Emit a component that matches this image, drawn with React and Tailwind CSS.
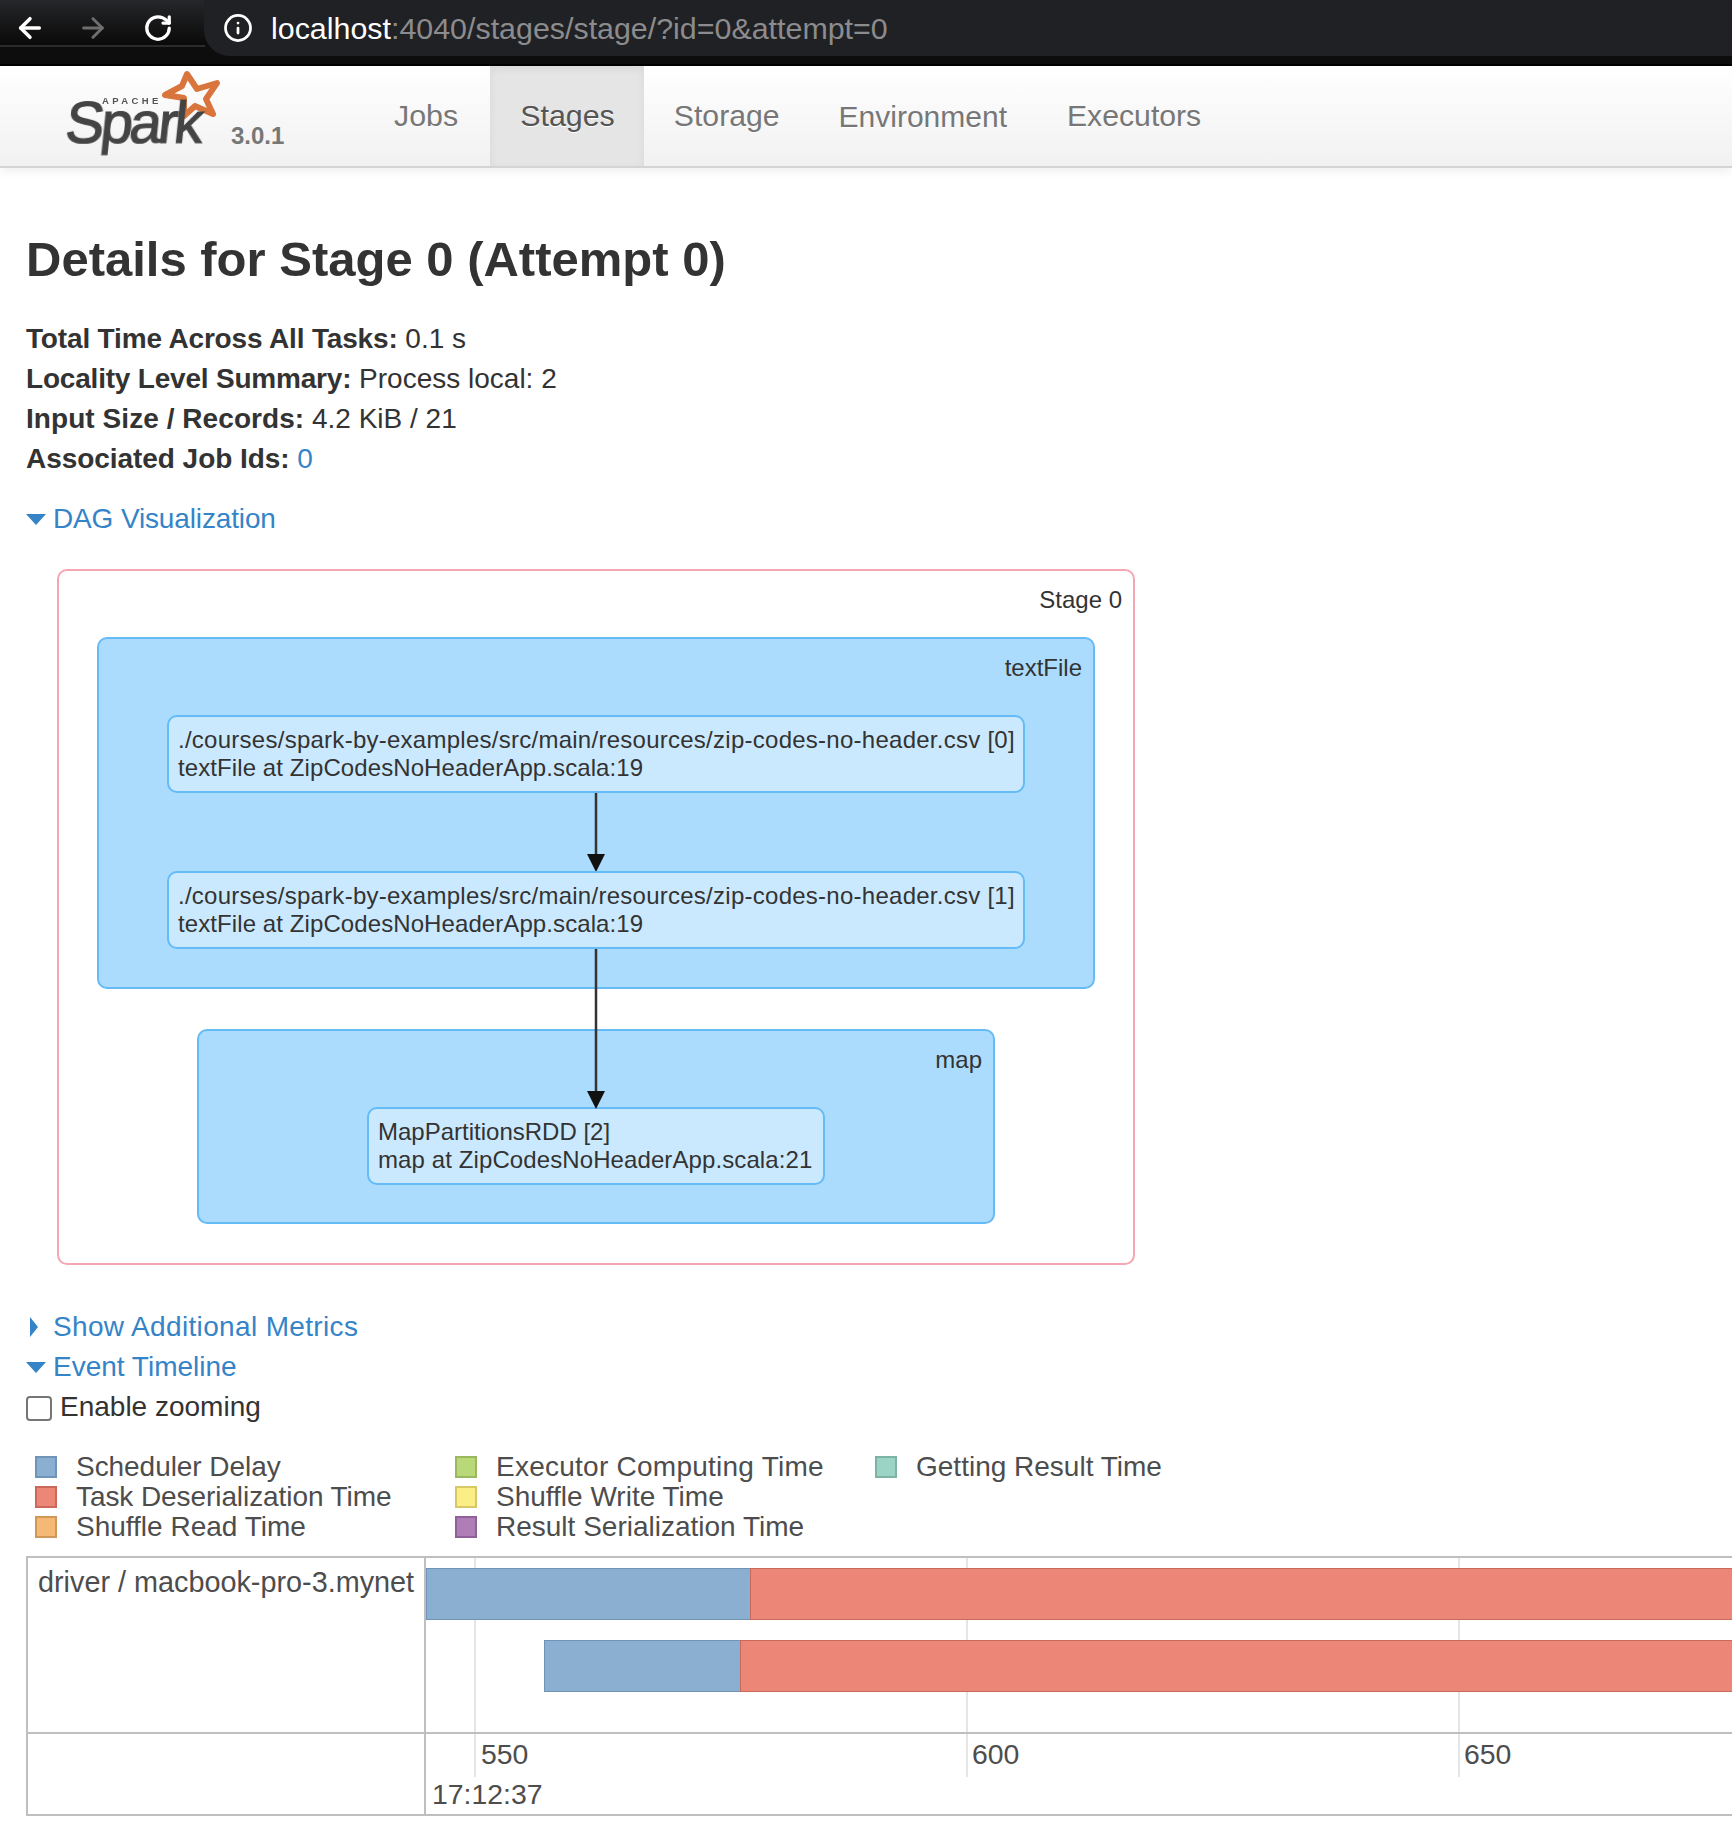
import React from "react";
import { ArrowLeft, ArrowRight, RotateCw, Info } from "lucide-react";

function Caret({ open }) {
  return open ? (
    <svg width="20" height="14" viewBox="0 0 20 14" className="mr-[7px] shrink-0"><polygon points="0,2 20,2 10,13" fill="#3584c8" /></svg>
  ) : (
    <svg width="20" height="20" viewBox="0 0 20 20" className="mr-[7px] shrink-0"><polygon points="4,0 4,20 12,10" fill="#3584c8" /></svg>
  );
}

function Arrow({ height, className }) {
  return (
    <svg width="20" height={height} viewBox={`0 0 20 ${height}`} className={`overflow-visible ${className}`}>
      <line x1="10" y1="0" x2="10" y2={height - 16} stroke="#333" strokeWidth="2.5" />
      <polygon points={`1,${height - 17} 19,${height - 17} 10,${height + 1}`} fill="#111" />
    </svg>
  );
}

function Node({ lines, className }) {
  return (
    <div className={`h-[78px] border-2 border-[#64bbf5] bg-[#cbe9fe] rounded-[10px] pl-[9px] pt-[9px] text-[24px] leading-[28px] text-[#333] whitespace-nowrap ${className}`}>
      {lines.map((l) => (<div key={l[0]} className={l[1]}>{l[0]}</div>))}
    </div>
  );
}

const legend = [
  ["Scheduler Delay", "bg-[#8aafd1] border-[#6f94b8]", "tracking-[-0.05px]"],
  ["Executor Computing Time", "bg-[#b9d878] border-[#9bb860]", "tracking-[0.25px]"],
  ["Getting Result Time", "bg-[#9bd3c5] border-[#7cb3a5]", ""],
  ["Task Deserialization Time", "bg-[#ec8778] border-[#c8695c]", "tracking-[-0.08px]"],
  ["Shuffle Write Time", "bg-[#fbee85] border-[#d8c868]", ""],
  null,
  ["Shuffle Read Time", "bg-[#f4b974] border-[#cf9858]", ""],
  ["Result Serialization Time", "bg-[#b07eb6] border-[#90609a]", ""],
  null,
];

const tabs = [
  ["Jobs", "pr-[32px] text-[30.4px] text-[#777]"],
  ["Stages", "pr-[29px] text-[30.4px] bg-[#e5e5e5] text-[#555] shadow-[inset_0_3px_8px_rgba(0,0,0,0.06)]"],
  ["Storage", "pr-[29px] text-[30.2px] text-[#777]"],
  ["Environment", "pr-[30px] text-[30px] text-[#777]"],
  ["Executors", "pr-[30px] text-[30.2px] text-[#777]"],
];

export default function App() {
  return (
    <div className="relative h-[1836px] w-[1732px] overflow-hidden bg-white font-['Liberation_Sans',Arial,sans-serif] text-[28px] text-[#333]">
      {/* browser bar */}
      <div className="flex h-[66px] bg-[#0d0d0d] border-b-2 border-black">
        <div className="flex h-[47px] w-[205px] items-center bg-gradient-to-b from-[#26272a] to-[#0a0a0a] border-b-2 border-[#2b2b2b] pt-[10px] pl-[14px] gap-[31px]">
          <ArrowLeft size={32} strokeWidth={2.6} className="text-white" />
          <ArrowRight size={32} strokeWidth={2.2} className="text-[#6e6e6e]" />
          <RotateCw size={30} strokeWidth={2.6} className="ml-[3px] text-white" />
        </div>
        <div className="flex h-[56px] flex-1 items-center rounded-bl-[26px] bg-[#202124] pl-[19px] -ml-[1px]">
          <Info size={30} strokeWidth={2.2} className="text-white" />
          <span className="ml-[18px] pt-[1px] text-[30.4px] text-[#8c8c8f]"><span className="text-white">localhost</span>:4040/stages/stage/?id=0&amp;attempt=0</span>
        </div>
      </div>

      {/* spark nav */}
      <div className="flex h-[102px] border-b-2 border-[#d4d4d4] bg-gradient-to-b from-white to-[#f1f1f1] shadow-[0_3px_10px_rgba(0,0,0,0.07)]">
        <div className="relative w-[364px] shrink-0">
          <svg width="70" height="70" viewBox="160 66 70 70" className="absolute left-[160px] top-0 overflow-visible">
            <polygon points="187,74 197,89 217,83 206,99 213,114 195,106 184,116 184,98 165,95 182,86" fill="none" stroke="#d9753c" strokeWidth="6" strokeLinejoin="round" />
          </svg>
          <span className="absolute left-[102px] top-[30px] text-[9.5px] font-bold tracking-[3.4px] leading-[10px] text-[#555] blur-[0.3px]">APACHE</span>
          <span className="absolute left-[66px] top-[40px] -skew-x-6 text-[58px] leading-[34px] tracking-[-3.5px] text-[#444] [-webkit-text-stroke:1.2px_#444] blur-[0.4px]">Spark</span>
          <span className="absolute left-[231px] top-[54px] text-[24px] font-bold leading-[32px] text-[#777]">3.0.1</span>
        </div>
        {tabs.map(([t, c]) => (
          <div key={t} className={`flex h-full items-center pl-[30px] [text-shadow:0_1px_0_#fff] ${c}`}>{t}</div>
        ))}
      </div>

      {/* page */}
      <div className="pl-[26px]">
        <h3 className="mt-[61px] mb-[30px] text-[49px] font-bold leading-[60px]">Details for Stage 0 (Attempt 0)</h3>
        <div className="leading-[40px]">
          <div><b className="tracking-[-0.16px]">Total Time Across All Tasks:</b> 0.1 s</div>
          <div><b className="tracking-[-0.2px]">Locality Level Summary:</b> Process local: 2</div>
          <div><b className="tracking-[0.06px]">Input Size / Records:</b> 4.2 KiB / 21</div>
          <div><b className="tracking-[-0.05px]">Associated Job Ids:</b> <span className="text-[#3584c8]">0</span></div>
        </div>
        <div className="mt-[20px] flex h-[40px] items-center tracking-[-0.14px] text-[#3584c8]"><Caret open />DAG Visualization</div>

        {/* DAG */}
        <div className="relative mt-[30px] ml-[31px] flex h-[696px] w-[1078px] flex-col items-center rounded-[10px] border-2 border-[#f4a6b3] bg-white pt-[15px] text-[24px] leading-[28px]">
          <div className="w-full pr-[11px] text-right">Stage 0</div>
          <div className="mt-[23px] flex h-[352px] w-[998px] flex-col items-center rounded-[10px] border-2 border-[#64bbf5] bg-[#abdcfd] pt-[15px]">
            <div className="w-full pr-[11px] text-right">textFile</div>
            <Node className="mt-[33px] w-[858px]" lines={[["./courses/spark-by-examples/src/main/resources/zip-codes-no-header.csv [0]", "tracking-[0.26px]"], ["textFile at ZipCodesNoHeaderApp.scala:19", "tracking-[0.09px]"]]} />
            <Arrow height={78} className="block" />
            <Node className="w-[858px]" lines={[["./courses/spark-by-examples/src/main/resources/zip-codes-no-header.csv [1]", "tracking-[0.26px]"], ["textFile at ZipCodesNoHeaderApp.scala:19", "tracking-[0.09px]"]]} />
          </div>
          <div className="mt-[40px] flex h-[195px] w-[798px] flex-col items-center rounded-[10px] border-2 border-[#64bbf5] bg-[#abdcfd] pt-[15px]">
            <div className="w-full pr-[11px] text-right">map</div>
            <Node className="mt-[33px] w-[458px]" lines={[["MapPartitionsRDD [2]", ""], ["map at ZipCodesNoHeaderApp.scala:21", "tracking-[0.1px]"]]} />
          </div>
          <Arrow height={159} className="absolute left-[527px] top-[378px]" />
        </div>

        <div className="mt-[42px] flex h-[40px] items-center tracking-[0.35px] text-[#3584c8]"><Caret />Show Additional Metrics</div>
        <div className="flex h-[40px] items-center text-[#3584c8]"><Caret open />Event Timeline</div>
        <div className="flex h-[40px] items-center">
          <span className="mt-[3px] mr-[8px] h-[25px] w-[26px] rounded-[4px] border-2 border-[#767676] bg-white" />
          Enable zooming
        </div>

        {/* legend */}
        <div className="mt-[25px] ml-[9px] grid grid-cols-[420px_420px_420px] text-[#4d4d4d]">
          {legend.map((l, i) => l ? (
            <div key={l[0]} className="flex h-[30px] items-center">
              <span className={`h-[22px] w-[22px] border-2 ${l[1]}`} />
              <span className={`ml-[19px] ${l[2]}`}>{l[0]}</span>
            </div>
          ) : <div key={i} />)}
        </div>

        {/* timeline */}
        <div className="mt-[14px] flex h-[260px] w-[1800px] flex-col border-y-2 border-l-2 border-[#bfbfbf] text-[28.4px] text-[#4d4d4d]">
          <div className="flex h-[176px] shrink-0 border-b-2 border-[#bfbfbf]">
            <div className="w-[398px] shrink-0 border-r-2 border-[#bfbfbf] pl-[10px] pt-[5px] text-[28.8px] leading-[38px]">driver / macbook-pro-3.mynet</div>
            <div className="relative flex-1">
              <div className="absolute left-[48px] top-0 h-[174px] w-[2px] bg-[#e5e5e5]" />
              <div className="absolute left-[540px] top-0 h-[174px] w-[2px] bg-[#e5e5e5]" />
              <div className="absolute left-[1032px] top-0 h-[174px] w-[2px] bg-[#e5e5e5]" />
              <div className="absolute left-0 top-[10px] h-[52px] w-[325px] border border-[#6f94b8] bg-[#8aafd1]" />
              <div className="absolute left-[324px] top-[10px] h-[52px] w-[1100px] border border-[#c8695c] bg-[#ec8778]" />
              <div className="absolute left-[118px] top-[82px] h-[52px] w-[197px] border border-[#6f94b8] bg-[#8aafd1]" />
              <div className="absolute left-[314px] top-[82px] h-[52px] w-[1100px] border border-[#c8695c] bg-[#ec8778]" />
            </div>
          </div>
          <div className="flex flex-1">
            <div className="w-[398px] shrink-0 border-r-2 border-[#bfbfbf]" />
            <div className="relative flex-1">
              <div className="absolute left-[48px] top-0 h-[43px] w-[2px] bg-[#e5e5e5]" />
              <div className="absolute left-[540px] top-0 h-[43px] w-[2px] bg-[#e5e5e5]" />
              <div className="absolute left-[1032px] top-0 h-[43px] w-[2px] bg-[#e5e5e5]" />
              <span className="absolute left-[55px] top-[1px] leading-[38px]">550</span>
              <span className="absolute left-[546px] top-[1px] leading-[38px]">600</span>
              <span className="absolute left-[1038px] top-[1px] leading-[38px]">650</span>
              <span className="absolute left-[6px] top-[41px] leading-[38px]">17:12:37</span>
            </div>
          </div>
        </div>
      </div>
    </div>
  );
}
